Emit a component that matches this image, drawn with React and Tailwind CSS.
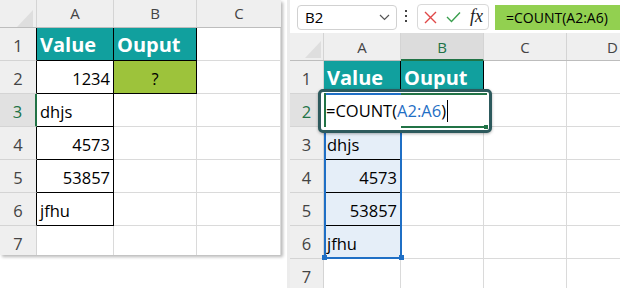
import React from 'react';

const leftRows = [
  { n: '1', a: 'Value', b: 'Ouput', head: true },
  { n: '2', a: '1234', b: '?', num: true },
  { n: '3', a: 'dhjs', active: true },
  { n: '4', a: '4573', num: true },
  { n: '5', a: '53857', num: true },
  { n: '6', a: 'jfhu' },
];

const rightRows = [
  { n: '3', a: 'dhjs' },
  { n: '4', a: '4573', num: true },
  { n: '5', a: '53857', num: true },
  { n: '6', a: 'jfhu', last: true },
];

function CornerTriangle({ className }) {
  return (
    <svg width="16" height="17" viewBox="0 0 16 17" className={className}>
      <path d="M16 0 L16 17 L0 17 Z" fill="#dedede" />
    </svg>
  );
}

function LeftSheet() {
  return (
    <div className="w-[281px] h-[255px] bg-white overflow-hidden shadow-[2px_2px_3px_rgba(0,0,0,0.28)] shrink-0">
      {/* column headers */}
      <div className="flex h-[28px] bg-[#efefef] border-b border-[#bdbdbd] text-[15px] text-[#444] leading-[26px]">
        <div className="relative w-[37px] border-r border-[#d4d4d4]">
          <CornerTriangle className="absolute right-[3px] bottom-0" />
        </div>
        <div className="w-[77px] border-r border-[#d4d4d4] text-center">A</div>
        <div className="w-[83px] border-r border-[#d4d4d4] text-center">B</div>
        <div className="w-[84px] text-center">C</div>
      </div>

      {leftRows.map((r) => (
        <div key={r.n} className="flex h-[33px] text-[16.5px] leading-[20px]">
          <div
            className={
              r.active
                ? 'w-[37px] bg-[#e1e1e1] text-[#217346] border-r-2 border-r-[#217346] border-b border-b-[#d4d4d4] text-center pt-[8px]'
                : 'w-[37px] bg-[#efefef] text-[#444] border-r border-r-black border-b border-b-[#d4d4d4] text-center pt-[8px]'
            }
          >
            {r.n}
          </div>
          <div
            className={
              r.head
                ? 'w-[77px] bg-[#11a09e] text-white font-bold text-[20px] border-r border-b border-black pl-[3px] pt-[7px]'
                : r.num
                ? 'w-[77px] text-black border-r border-b border-black pr-[3px] pt-[8px] text-right'
                : 'w-[77px] text-black border-r border-b border-black pl-[3px] pt-[8px]'
            }
          >
            {r.a}
          </div>
          <div
            className={
              r.head
                ? 'w-[83px] bg-[#11a09e] text-white font-bold text-[20px] border-r border-b border-black pl-[3px] pt-[7px]'
                : r.b
                ? 'w-[83px] bg-[#9dc33b] text-black border-r border-b border-black text-center pt-[8px]'
                : 'w-[83px] border-r border-b border-[#dadada]'
            }
          >
            {r.b}
          </div>
          <div className="w-[84px] border-r border-b border-[#dadada]" />
        </div>
      ))}

      <div className="flex h-[30px] text-[16.5px] leading-[20px]">
        <div className="w-[37px] bg-[#efefef] text-[#444] border-r border-[#d4d4d4] text-center pt-[8px]">7</div>
        <div className="w-[77px] border-r border-[#dadada]" />
        <div className="w-[83px] border-r border-[#dadada]" />
        <div className="w-[84px] border-r border-[#dadada]" />
      </div>
    </div>
  );
}

function FormulaBar() {
  return (
    <div className="flex h-[33px] bg-white items-start">
      <div className="mt-[5px] ml-[7px] w-[100px] h-[25px] border border-[#d1d1d1] rounded-[4px] flex items-center justify-between pl-[7px] pr-[6px] text-[15px] text-black">
        <span>B2</span>
        <svg width="11" height="7" viewBox="0 0 11 7">
          <path d="M1 1 L5.5 5.5 L10 1" fill="none" stroke="#555" strokeWidth="1.2" />
        </svg>
      </div>
      <div className="mt-[10px] ml-[8px] w-[3px] flex flex-col gap-[3px]">
        <div className="w-[2px] h-[2px] bg-[#444]" />
        <div className="w-[2px] h-[2px] bg-[#444]" />
        <div className="w-[2px] h-[2px] bg-[#444]" />
      </div>
      <div className="mt-[4px] ml-[9px] w-[72px] h-[26px] border border-[#d9d9d9] rounded-[4px] flex items-center pl-[6px] gap-[9px]">
        <svg width="13" height="13" viewBox="0 0 13 13">
          <path d="M1 1 L12 12 M12 1 L1 12" stroke="#e04848" strokeWidth="1.4" />
        </svg>
        <svg width="15" height="12" viewBox="0 0 15 12">
          <path d="M1 6 L5.5 10.5 L14 1.5" fill="none" stroke="#3a9f4e" strokeWidth="1.4" />
        </svg>
        <span className="font-['Liberation_Serif',serif] italic text-[18px] leading-none text-[#222] -mt-[3px]">fx</span>
      </div>
      <div className="mt-[5px] ml-[6px] flex-1 h-[25px] bg-[#92d050] text-[14px] text-black flex items-center pl-[11px]">
        =COUNT(A2:A6)
      </div>
    </div>
  );
}

function RightSheet() {
  return (
    <div className="relative flex-1 h-[288px] bg-white overflow-hidden">
      <FormulaBar />

      <div className="flex h-[28px] bg-[#efefef] border-b border-[#bdbdbd] text-[15px] text-[#444] leading-[26px]">
        <div className="relative w-[34px] border-r border-[#d4d4d4]">
          <CornerTriangle className="absolute right-[2px] bottom-[2px]" />
        </div>
        <div className="w-[77px] border-r border-[#d4d4d4] text-center pt-[1px]">A</div>
        <div className="w-[83px] h-[28px] bg-[#dcdcdc] text-[#217346] border-r border-[#d4d4d4] border-b-2 border-b-[#217346] text-center pt-[1px]">B</div>
        <div className="w-[83px] border-r border-[#d4d4d4] text-center pt-[1px]">C</div>
        <div className="flex-1 text-right pr-[2px] pt-[1px]">D</div>
      </div>

      {/* row 1 */}
      <div className="flex h-[33px] text-[16.5px] leading-[20px]">
        <div className="w-[34px] bg-[#efefef] text-[#444] border-r border-b border-[#d4d4d4] text-center pt-[8px]">1</div>
        <div className="w-[77px] bg-[#11a09e] text-white font-bold text-[20px] border-r border-b border-black pl-[3px] pt-[7px]">Value</div>
        <div className="w-[83px] bg-[#11a09e] text-white font-bold text-[20px] border-r border-b border-black pl-[3px] pt-[7px]">Ouput</div>
        <div className="w-[83px] border-r border-b border-[#dadada]" />
        <div className="flex-1 border-b border-[#dadada]" />
      </div>

      {/* row 2 */}
      <div className="flex h-[33px] text-[16.5px] leading-[20px]">
        <div className="w-[34px] bg-[#e1e1e1] text-[#217346] border-r border-b border-[#d4d4d4] text-center pt-[8px]">2</div>
        <div className="w-[77px] bg-[#e5eef8] border-r border-b border-black" />
        <div className="w-[83px] border-r border-b border-[#dadada]" />
        <div className="w-[83px] border-r border-b border-[#dadada]" />
        <div className="flex-1 border-b border-[#dadada]" />
      </div>

      {rightRows.map((r) => (
        <div key={r.n} className="flex h-[33px] text-[16.5px] leading-[20px]">
          <div className="w-[34px] bg-[#efefef] text-[#444] border-r border-b border-[#d4d4d4] text-center pt-[8px]">{r.n}</div>
          <div
            className={
              r.num
                ? 'w-[77px] bg-[#e5eef8] text-black border-r border-b border-black pr-[3px] pt-[8px] text-right'
                : 'w-[77px] bg-[#e5eef8] text-black border-r border-b border-black pl-[3px] pt-[8px]'
            }
          >
            {r.a}
          </div>
          <div className="w-[83px] border-r border-b border-[#dadada]" />
          <div className="w-[83px] border-r border-b border-[#dadada]" />
          <div className="flex-1 border-b border-[#dadada]" />
        </div>
      ))}

      <div className="flex h-[30px] text-[16.5px] leading-[20px]">
        <div className="w-[34px] bg-[#efefef] text-[#444] border-r border-[#d4d4d4] text-center pt-[8px]">7</div>
        <div className="w-[77px] border-r border-[#dadada]" />
        <div className="w-[83px] border-r border-[#dadada]" />
        <div className="w-[83px] border-r border-[#dadada]" />
        <div className="flex-1" />
      </div>

      {/* range selection A2:A6 */}
      <div className="absolute left-[34px] top-[93px] w-[78px] h-[166px] border-2 border-[#1f6fc5]" />
      <div className="absolute left-[32px] top-[255px] w-[5px] h-[5px] bg-[#1f6fc5]" />
      <div className="absolute left-[109px] top-[255px] w-[5px] h-[5px] bg-[#1f6fc5]" />

      {/* in-cell editor */}
      <div className="absolute left-[28px] top-[89px] w-[174px] h-[44px] border-[3px] border-[#2d5a5d] rounded-[5px] bg-white shadow-[0_1px_3px_rgba(0,0,0,0.3)]">
        <div className="absolute left-[3px] top-[1px] w-[2px] h-[34px] bg-[#217346]" />
        <div className="absolute left-[5px] top-[1px] w-[75px] h-[2px] bg-[#1f6fc5]" />
        <div className="absolute left-[80px] top-[1px] w-[86px] h-[2px] bg-[#217346]" />
        <div className="absolute left-[80px] top-[34px] w-[84px] h-[2px] bg-[#217346]" />
        <div className="absolute left-[163px] top-[33px] w-[4px] h-[4px] bg-[#217346]" />
        <div className="absolute left-[5px] top-[7px] flex items-center text-[16.5px] leading-[24px] text-black">
          <span>=COUNT(</span>
          <span className="text-[#1f6fc5]">A2:A6</span>
          <span>)</span>
          <span className="ml-[1px] w-[1px] h-[22px] bg-black" />
        </div>
      </div>
    </div>
  );
}

export default function App() {
  return (
    <div className="w-[620px] h-[288px] bg-white flex font-['Open_Sans',sans-serif] overflow-hidden">
      <LeftSheet />
      <div className="w-[6px] shrink-0" />
      <div className="w-[3px] h-[288px] bg-[#ececec] shrink-0" />
      <RightSheet />
    </div>
  );
}
